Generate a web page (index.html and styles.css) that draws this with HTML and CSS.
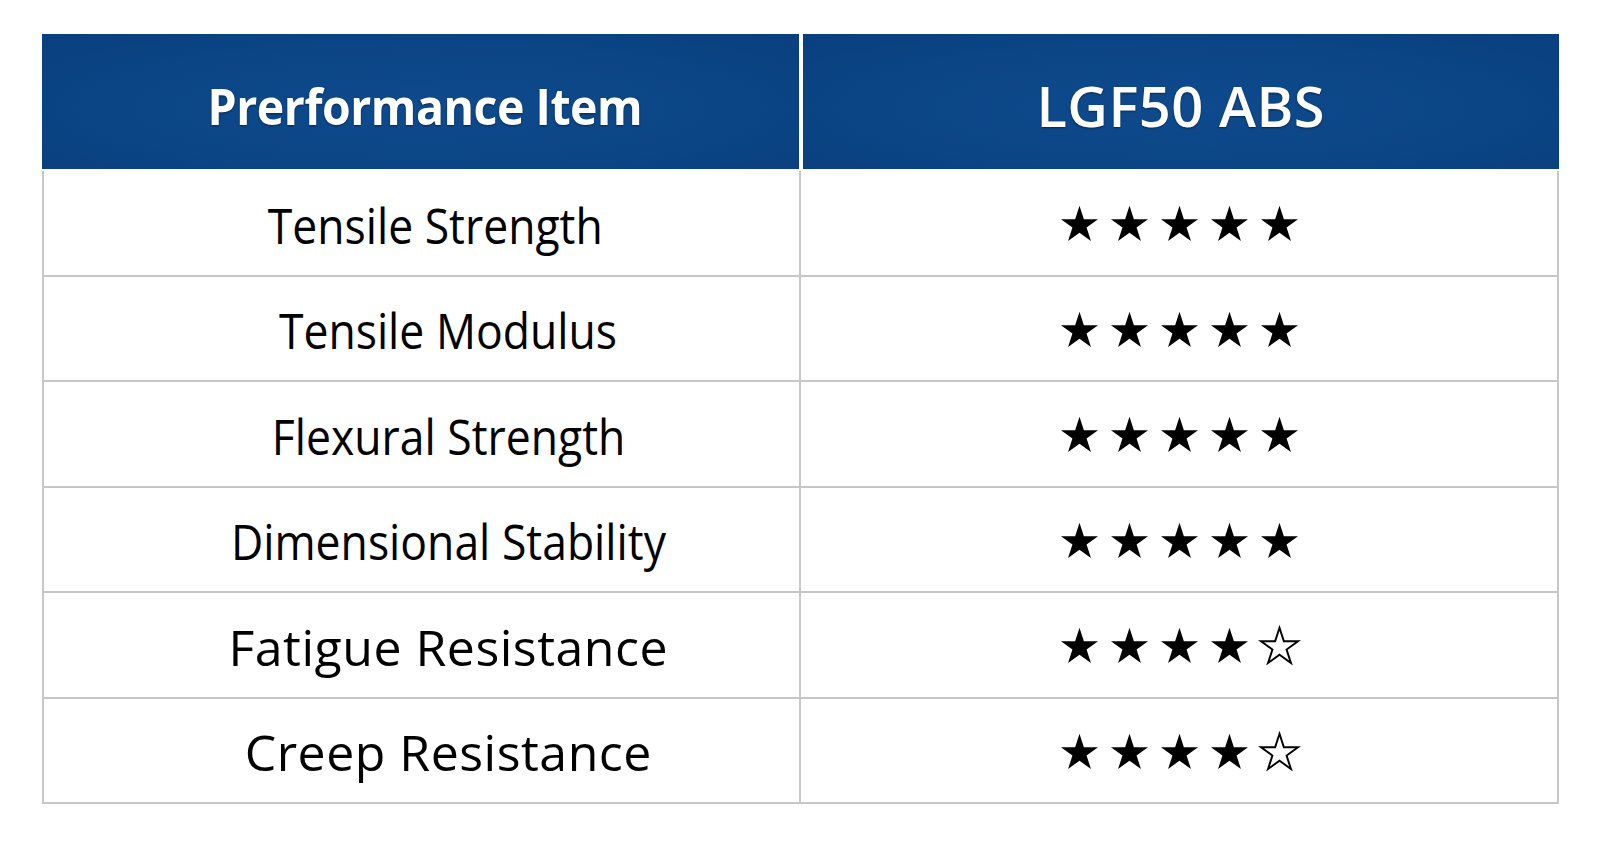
FILE: index.html
```html
<!DOCTYPE html>
<html lang="en">
<head>
<meta charset="utf-8">
<title>LGF50 ABS Performance</title>
<link rel="stylesheet" href="styles.css">
</head>
<body>
<svg class="defs" width="0" height="0" aria-hidden="true">
  <defs>
    <polygon id="star" points="50,2 61.23,36.55 97.55,36.55 68.17,57.9 79.39,92.45 50,71.1 20.61,92.45 31.83,57.9 2.45,36.55 38.77,36.55"/>
  </defs>
</svg>
<div class="page">
  <div class="table">
    <div class="head">
      <div class="hcell hcell-item"><span class="htext htext-item">Prerformance Item</span></div>
      <div class="hcell hcell-mat"><span class="htext">LGF50 ABS</span></div>
    </div>
    <div class="body">
      <div class="row">
        <div class="cell cell-name cell-name-left"><span class="name name-tight">Tensile Strength</span></div>
        <div class="cell cell-rate" aria-label="5 of 5">
          <svg class="star" viewBox="0 0 100 95"><use href="#star"/></svg>
          <svg class="star" viewBox="0 0 100 95"><use href="#star"/></svg>
          <svg class="star" viewBox="0 0 100 95"><use href="#star"/></svg>
          <svg class="star" viewBox="0 0 100 95"><use href="#star"/></svg>
          <svg class="star" viewBox="0 0 100 95"><use href="#star"/></svg>
        </div>
      </div>
      <div class="row">
        <div class="cell cell-name"><span class="name name-tight">Tensile Modulus</span></div>
        <div class="cell cell-rate" aria-label="5 of 5">
          <svg class="star" viewBox="0 0 100 95"><use href="#star"/></svg>
          <svg class="star" viewBox="0 0 100 95"><use href="#star"/></svg>
          <svg class="star" viewBox="0 0 100 95"><use href="#star"/></svg>
          <svg class="star" viewBox="0 0 100 95"><use href="#star"/></svg>
          <svg class="star" viewBox="0 0 100 95"><use href="#star"/></svg>
        </div>
      </div>
      <div class="row">
        <div class="cell cell-name"><span class="name name-tight">Flexural Strength</span></div>
        <div class="cell cell-rate" aria-label="5 of 5">
          <svg class="star" viewBox="0 0 100 95"><use href="#star"/></svg>
          <svg class="star" viewBox="0 0 100 95"><use href="#star"/></svg>
          <svg class="star" viewBox="0 0 100 95"><use href="#star"/></svg>
          <svg class="star" viewBox="0 0 100 95"><use href="#star"/></svg>
          <svg class="star" viewBox="0 0 100 95"><use href="#star"/></svg>
        </div>
      </div>
      <div class="row">
        <div class="cell cell-name"><span class="name name-tight">Dimensional Stability</span></div>
        <div class="cell cell-rate" aria-label="5 of 5">
          <svg class="star" viewBox="0 0 100 95"><use href="#star"/></svg>
          <svg class="star" viewBox="0 0 100 95"><use href="#star"/></svg>
          <svg class="star" viewBox="0 0 100 95"><use href="#star"/></svg>
          <svg class="star" viewBox="0 0 100 95"><use href="#star"/></svg>
          <svg class="star" viewBox="0 0 100 95"><use href="#star"/></svg>
        </div>
      </div>
      <div class="row">
        <div class="cell cell-name"><span class="name name-wide">Fatigue Resistance</span></div>
        <div class="cell cell-rate" aria-label="4 of 5">
          <svg class="star" viewBox="0 0 100 95"><use href="#star"/></svg>
          <svg class="star" viewBox="0 0 100 95"><use href="#star"/></svg>
          <svg class="star" viewBox="0 0 100 95"><use href="#star"/></svg>
          <svg class="star" viewBox="0 0 100 95"><use href="#star"/></svg>
          <svg class="star star-empty" viewBox="0 0 100 95"><use href="#star"/></svg>
        </div>
      </div>
      <div class="row">
        <div class="cell cell-name"><span class="name name-wide">Creep Resistance</span></div>
        <div class="cell cell-rate" aria-label="4 of 5">
          <svg class="star" viewBox="0 0 100 95"><use href="#star"/></svg>
          <svg class="star" viewBox="0 0 100 95"><use href="#star"/></svg>
          <svg class="star" viewBox="0 0 100 95"><use href="#star"/></svg>
          <svg class="star" viewBox="0 0 100 95"><use href="#star"/></svg>
          <svg class="star star-empty" viewBox="0 0 100 95"><use href="#star"/></svg>
        </div>
      </div>
    </div>
  </div>
</div>
</body>
</html>
```
FILE: styles.css
```css
html, body {
  margin: 0;
  padding: 0;
  background: #ffffff;
}
.defs {
  position: absolute;
  width: 0;
  height: 0;
  overflow: hidden;
}
.page {
  padding: 34px 41px 0 42px;
}
.table {
  display: flex;
  flex-direction: column;
}
.head {
  display: grid;
  grid-template-columns: 1fr 1fr;
  column-gap: 4px;
  height: 135px;
}
.hcell {
  display: flex;
  align-items: center;
  justify-content: center;
  background: radial-gradient(ellipse at 50% 55%, #0e4a8d 0%, #0b4585 60%, #093f7e 100%);
  color: #ffffff;
  font-family: "Open Sans", "Noto Sans", sans-serif;
  text-shadow: 0 1px 2px rgba(0, 0, 0, 0.45);
  padding-top: 6px;
  box-sizing: border-box;
}
.htext {
  display: inline-block;
  white-space: nowrap;
}
.hcell-item {
  font-size: 51px;
  font-weight: 700;
  letter-spacing: -0.5px;
  padding-left: 10px;
}
.htext-item {
  transform: scaleX(0.91);
}
.hcell-mat {
  font-size: 56px;
  font-weight: 600;
  font-stretch: 96%;
  letter-spacing: 0.5px;
}
.body {
  margin-top: 2px;
  border-left: 2px solid #c8c8c8;
  border-right: 2px solid #c8c8c8;
}
.row {
  display: grid;
  grid-template-columns: 1fr 1fr;
  height: 105.5px;
  border-bottom: 2px solid #c6c6c6;
  box-sizing: border-box;
}
.cell {
  display: flex;
  align-items: center;
  justify-content: center;
}
.cell-name {
  border-right: 2px solid #c8c8c8;
  font-family: "Open Sans", "Noto Sans", sans-serif;
  font-size: 50px;
  color: #000000;
  padding-left: 54px;
  padding-top: 4px;
}
.cell-name-left {
  padding-left: 28px;
}
.name {
  display: inline-block;
  white-space: nowrap;
}
.name-tight {
  transform: scaleX(0.89);
}
.name-wide {
  letter-spacing: 0.5px;
}
.cell-rate {
  gap: 11px;
  padding-top: 2px;
  padding-left: 2px;
}
.star {
  width: 39px;
  height: 37px;
  fill: #000000;
  overflow: visible;
}
.star-empty {
  fill: #ffffff;
  stroke: #000000;
  stroke-width: 5;
  stroke-linejoin: miter;
}
```
